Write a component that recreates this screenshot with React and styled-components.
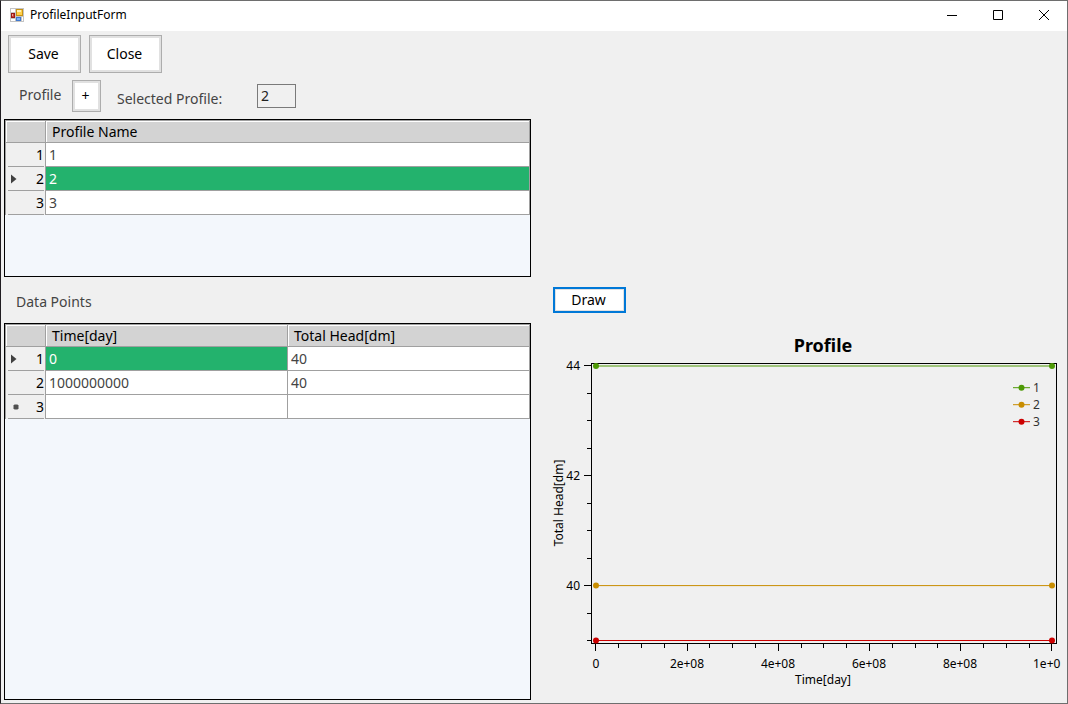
import React, { useState } from 'react';
import styled, { createGlobalStyle } from 'styled-components';

const GlobalStyle = createGlobalStyle`
  * {
    box-sizing: border-box;
  }

  body {
    margin: 0;
    font-family: "Noto Sans", "Open Sans", sans-serif;
    font-size: 14px;
    line-height: 20px;
    color: #000;
  }

  button,
  input {
    font: inherit;
    color: inherit;
  }
`;

const Window = styled.div`
  display: flex;
  flex-direction: column;
  min-height: 100vh;
  border: 1px solid #6e6e6e;
  border-left-color: #1f1c20;
  background: #f0f0f0;
`;

const TitleBar = styled.header`
  display: flex;
  align-items: center;
  height: 30px;
  padding: 0 0 2px 9px;
  background: #fff;
`;

const Title = styled.h1`
  flex: 1;
  margin: 0 0 0 6px;
  font-size: 12px;
  font-weight: normal;
`;

const CaptionButton = styled.button`
  display: flex;
  align-items: center;
  justify-content: center;
  width: 46px;
  height: 28px;
  padding: 0;
  border: 0;
  background: none;
`;

const Body = styled.main`
  display: grid;
  flex: 1;
  grid-template-columns: minmax(0, 527fr) minmax(0, 510fr);
  column-gap: 22px;
  padding: 4px 4px 3px 3px;
`;

const Column = styled.div`
  display: flex;
  flex-direction: column;
  align-items: stretch;
`;

const Toolbar = styled.div`
  display: flex;
  gap: 8px;
  padding-left: 4px;
`;

const Button = styled.button`
  width: ${({ $square }) => ($square ? 29 : 73)}px;
  height: ${({ $square }) => ($square ? 32 : 38)}px;
  padding: 0 2px 1px 0;
  border: 1px solid #adadad;
  background: #fff;
  box-shadow: inset 0 0 0 2px #e1e1e1;
`;

const DrawButton = styled(Button)`
  height: 26px;
  border: 2px solid #0078d7;
  box-shadow: inset 0 0 0 1px #e1e1e1;
`;

const ProfileRow = styled.div`
  display: flex;
  align-items: flex-start;
  height: 32px;
  margin: 7px 0;
  padding-left: 15px;
`;

const ProfileLabel = styled.span`
  width: 53px;
  padding-top: 5px;
  color: #444;
`;

const SelectedLabel = styled.label`
  width: 156px;
  padding: 9px 0 0 16px;
  color: #444;
`;

const SelectedInput = styled.input`
  width: 39px;
  height: 24px;
  margin-top: 4px;
  padding: 0 3px 2px;
  border: 1px solid #7a7a7a;
  background: #f0f0f0;
  color: #222;
`;

const SectionTitle = styled.h2`
  height: 46px;
  margin: 0;
  padding: 15px 12px 0;
  font-size: 14px;
  font-weight: normal;
  line-height: 20px;
  color: #444;
`;

const GridBox = styled.div`
  flex: ${({ $fill }) => ($fill ? '1' : '0 0 158px')};
  border: 1px solid #000;
  background: #f3f7fc;
`;

const Table = styled.table`
  width: 100%;
  border-collapse: separate;
  border-spacing: 0;
  table-layout: fixed;
  border: 1px solid #a0a0a0;
  border-width: 1px 0 0 1px;

  th,
  td {
    padding: 0 0 0 3px;
    border-right: 1px solid #a0a0a0;
    border-bottom: 1px solid #a0a0a0;
    font-weight: normal;
    text-align: left;
  }
`;

const HeadCell = styled.th`
  height: 22px;
  background: #d3d3d3;
  box-shadow: inset 1px 1px 0 #fff;

  && {
    padding-left: 6px;
  }
`;

const CornerCell = styled(HeadCell)`
  width: 40px;
`;

const RowHeader = styled.th`
  height: 24px;
  background: #f0f0f0;

  && {
    padding: 0 1px 0 2px;
    border-bottom: 0;
  }
`;

const RowHeaderInner = styled.span`
  display: flex;
  align-items: center;
  justify-content: space-between;
  height: 24px;
  padding-left: 2px;
  border-bottom: 1px solid #a0a0a0;
`;

const Cell = styled.td`
  height: 24px;
  background: ${({ $selected }) => ($selected ? '#23b26d' : '#fff')};
  color: ${({ $selected }) => ($selected ? '#fff' : '#444')};
`;

const DrawRow = styled.div`
  padding: 252px 0 17px;
`;

const ChartSvg = styled.svg`
  display: block;
  width: 100%;
  font-size: 12px;
  overflow: visible;
`;

const series = [
  { name: '1', color: '#4e9a06', points: [[0, 44], [1e9, 44]] },
  { name: '2', color: '#c88d00', points: [[0, 40], [1e9, 40]] },
  { name: '3', color: '#cc0000', points: [[0, 39], [1e9, 39]] },
];

const xTicks = ['0', '2e+08', '4e+08', '6e+08', '8e+08'];
const xScale = value => 43 + (value / 1e9) * 456;
const yScale = value => 36 + (44 - value) * 54.9;

function AppIcon() {
  return (
    <svg width="14" height="14" viewBox="0 0 14 14" aria-hidden="true">
      <path d="M0 0h14v14H0z" fill="#c4c4c4" />
      <path d="M1 1h4v3H1zM1 11h4v2H1zM12 9h1v4h-1z" fill="#fff" />
      <rect x="6.5" y="1.5" width="6" height="6" fill="#ffd04a" stroke="#c69214" />
      <path d="M7 2h4v2H7z" fill="#fff0b4" />
      <rect x="1.5" y="5.5" width="3" height="4" fill="#c8403a" stroke="#981a16" />
      <path d="M2 6h1v2H2z" fill="#f0a090" />
      <rect x="6.5" y="9.5" width="4" height="3" fill="#7db1f2" stroke="#3f78cf" />
    </svg>
  );
}

function Marker({ type }) {
  return (
    <svg width="14" height="12" viewBox="0 0 14 12" aria-hidden="true">
      {type === 'current' && <path d="M1 1.5v9L6.5 6z" fill="#404040" />}
      {type === 'new' && <path d="M4.5 3.5h3l1 1v3l-1 1h-3l-1-1v-3z" fill="#505050" />}
    </svg>
  );
}

function DataGrid({ columns, rows, current, newRow, wholeRow, onSelect }) {
  return (
    <Table>
      <thead>
        <tr>
          <CornerCell aria-label="Row" />
          {columns.map(column => <HeadCell key={column} scope="col">{column}</HeadCell>)}
        </tr>
      </thead>
      <tbody>
        {rows.map((row, i) => (
          <tr key={i} onClick={() => onSelect(i)}>
            <RowHeader scope="row">
              <RowHeaderInner>
                <Marker type={(i === current && 'current') || (i === newRow && 'new')} />
                {i + 1}
              </RowHeaderInner>
            </RowHeader>
            {row.map((value, j) => (
              <Cell key={columns[j]} $selected={i === current && (wholeRow || j === 0)}>
                {value}
              </Cell>
            ))}
          </tr>
        ))}
      </tbody>
    </Table>
  );
}

function Chart() {
  return (
    <ChartSvg viewBox="0 0 510 360" role="img" aria-label="Profile chart">
      <text x="270" y="22" textAnchor="middle" fontSize="18" fontWeight="bold">Profile</text>
      <rect x="38.5" y="33.5" width="465" height="280" fill="none" stroke="#000" />

      {Array.from({ length: 11 }, (_, i) => {
        const y = Math.round(35 + i * 27.5) + 0.5;
        return <line key={i} x1={i % 4 === 0 ? 31 : 34} x2="38" y1={y} y2={y} stroke="#000" />;
      })}
      {[44, 42, 40].map((label, i) => (
        <text key={label} x="27" y={40 + i * 110} textAnchor="end">{label}</text>
      ))}

      {Array.from({ length: 21 }, (_, i) => {
        const x = Math.ceil(42 + (i * 456) / 20) + 0.5;
        return <line key={i} x1={x} x2={x} y1="314" y2={i % 4 === 0 ? 321 : 318} stroke="#000" />;
      })}
      {xTicks.map((label, i) => (
        <text key={label} x={43 + i * 91} y="338" textAnchor="middle">{label}</text>
      ))}
      <text x="480" y="338">1e+0</text>

      <text x="270" y="354" textAnchor="middle">Time[day]</text>
      <text transform="translate(10 173) rotate(-90)" textAnchor="middle">Total Head[dm]</text>

      {series.map(({ name, color, points }, i) => (
        <g key={name} fill={color}>
          <polyline
            points={points.map(([x, y]) => `${xScale(x)},${yScale(y)}`).join(' ')}
            fill="none"
            stroke={color}
          />
          {points.map(([x, y]) => <circle key={x} cx={xScale(x)} cy={yScale(y)} r="3" />)}
          <line x1="460" x2="477" y1={57.7 + i * 17} y2={57.7 + i * 17} stroke={color} />
          <circle cx="468.5" cy={57.7 + i * 17} r="3" />
          <text x="480" y={62 + i * 17} fill="#333">{name}</text>
        </g>
      ))}
    </ChartSvg>
  );
}

export default function App() {
  const [profile, setProfile] = useState(1);
  const [point, setPoint] = useState(0);

  return (
    <Window>
      <GlobalStyle />
      <TitleBar>
        <AppIcon />
        <Title>ProfileInputForm</Title>
        <CaptionButton type="button" aria-label="Minimize">
          <svg width="10" height="10"><path d="M0 5.5h10" stroke="#000" /></svg>
        </CaptionButton>
        <CaptionButton type="button" aria-label="Maximize">
          <svg width="10" height="10"><path d="M.5.5h9v9h-9z" stroke="#000" fill="none" /></svg>
        </CaptionButton>
        <CaptionButton type="button" aria-label="Close window">
          <svg width="10" height="10"><path d="M0 0l10 10M10 0L0 10" stroke="#000" /></svg>
        </CaptionButton>
      </TitleBar>

      <Body>
        <Column>
          <Toolbar>
            <Button type="button">Save</Button>
            <Button type="button">Close</Button>
          </Toolbar>
          <ProfileRow>
            <ProfileLabel>Profile</ProfileLabel>
            <Button type="button" $square aria-label="Add profile">+</Button>
            <SelectedLabel htmlFor="selected">Selected Profile:</SelectedLabel>
            <SelectedInput id="selected" readOnly value={profile + 1} />
          </ProfileRow>
          <GridBox>
            <DataGrid
              columns={['Profile Name']}
              rows={[['1'], ['2'], ['3']]}
              current={profile}
              wholeRow
              onSelect={setProfile}
            />
          </GridBox>
          <SectionTitle>Data Points</SectionTitle>
          <GridBox $fill>
            <DataGrid
              columns={['Time[day]', 'Total Head[dm]']}
              rows={[['0', '40'], ['1000000000', '40'], ['', '']]}
              current={point}
              newRow={2}
              onSelect={setPoint}
            />
          </GridBox>
        </Column>

        <Column>
          <DrawRow>
            <DrawButton type="button">Draw</DrawButton>
          </DrawRow>
          <Chart />
        </Column>
      </Body>
    </Window>
  );
}
